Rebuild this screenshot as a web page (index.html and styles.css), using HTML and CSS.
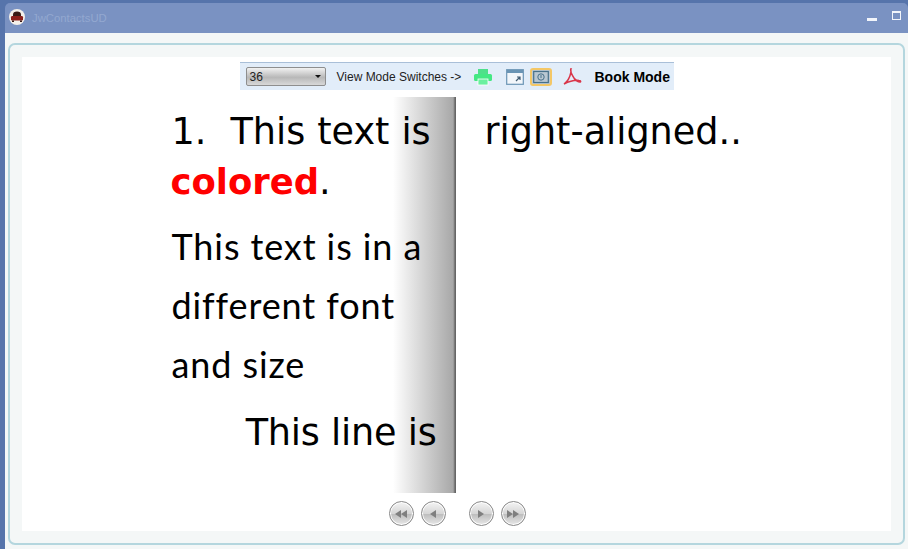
FILE: index.html
```html
<!DOCTYPE html>
<html lang="en">
<head>
    <meta charset="UTF-8">
    <title>JwContactsUD</title>
    <link rel="stylesheet" href="styles.css">
</head>
<body>
    <div class="window">
        <div class="titlebar">
            <div class="app-icon">
                <svg width="18" height="18" viewBox="0 0 18 18">
                    <circle cx="9" cy="9" r="8" fill="#f4f0ea"/>
                    <path d="M5 6.500a4 3 0 0 1 8 0v2H5z" fill="#3a1a14"/>
                    <rect x="3" y="8" width="12" height="4.500" rx="1.200" fill="#8c1f1a"/>
                    <rect x="4" y="12.500" width="2" height="1.500" fill="#3a1a14"/>
                    <rect x="12" y="12.500" width="2" height="1.500" fill="#3a1a14"/>
                </svg>
            </div>
            <span class="app-title">JwContactsUD</span>
            <div class="window-buttons">
                <span class="btn-min"></span>
                <span class="btn-max"></span>
            </div>
        </div>
        <div class="client">
            <div class="panel">
                <div class="content">
                    <div class="toolbar">
                        <div class="zoom-select"><span>36</span><i class="arrow"></i></div>
                        <span class="mode-label">View Mode Switches -&gt;</span>
                        <svg class="tool tool-print" width="20" height="18" viewBox="0 0 20 18">
                            <rect x="5" y="1" width="10" height="5" fill="#4fe08a"/>
                            <rect x="1" y="6" width="18" height="7" rx="1.500" fill="#45e884"/>
                            <rect x="5" y="11" width="10" height="6" fill="#6cf0a0" stroke="#fff" stroke-width=".8"/>
                        </svg>
                        <svg class="tool tool-window" width="18" height="16" viewBox="0 0 18 16">
                            <rect x=".7" y=".7" width="16.600" height="14.600" fill="#f2f6fa" stroke="#6a94b4" stroke-width="1.200"/>
                            <rect x="1" y="1" width="16" height="3" fill="#6a94b4"/>
                            <path d="M10 12l4-4m-3 0h3v3" fill="none" stroke="#3f5a70" stroke-width="1.200"/>
                        </svg>
                        <div class="tool-active">
                            <svg width="16" height="14" viewBox="0 0 16 14">
                                <rect x=".7" y="1.500" width="14.600" height="11" fill="none" stroke="#47708a" stroke-width="1.200"/>
                                <circle cx="8" cy="7" r="3.200" fill="none" stroke="#47708a"/>
                                <path d="M8 5v3" stroke="#47708a"/>
                            </svg>
                        </div>
                        <svg class="tool tool-pdf" width="20" height="18" viewBox="0 0 20 18">
                            <path d="M9 1c-1 2 1 6 3 9 1.500 2 4 4 6 4 1 0 1-1.500-1-1.500-4-.5-9 .5-15 3.500 3-2 6-7 7-12 .2-1.500-.5-3-1-3z" fill="none" stroke="#d9364a" stroke-width="1.500"/>
                        </svg>
                        <span class="mode-name">Book Mode</span>
                    </div>
                    <div class="book">
                        <div class="page page-left">
                            <p class="line-plain first-line spaced">1.&nbsp; This text is</p>
                            <p class="line-plain"><b class="red">colored</b>.</p>
                            <p class="line-font first">This text is in a</p>
                            <p class="line-font">different font</p>
                            <p class="line-font">and size</p>
                            <p class="line-plain line-end">This line is</p>
                        </div>
                        <div class="page page-right">
                            <p class="line-plain first-line">right-aligned..</p>
                        </div>
                    </div>
                    <div class="pager">
                        <button class="nav"><i class="tri left"></i><i class="tri left"></i></button>
                        <button class="nav"><i class="tri left"></i></button>
                        <button class="nav nav-gap"><i class="tri right"></i></button>
                        <button class="nav"><i class="tri right"></i><i class="tri right"></i></button>
                    </div>
                </div>
            </div>
        </div>
    </div>
</body>
</html>
```

FILE: styles.css
```css
body {
    margin: 0;
    height: 549px;
    overflow: hidden;
    background-color: #5674ab;
    font-family: "Liberation Sans", Arial, sans-serif;
    padding: 3px 0 0 5px;
    box-sizing: border-box;
}
.window {
    height: 546px;
    display: flex;
    flex-direction: column;
    border-radius: 5px 5px 0 0;
    overflow: hidden;
}
.titlebar {
    height: 30px;
    flex: none;
    background-color: #7a92c2;
    display: flex;
    align-items: center;
    padding-left: 3px;
}
.app-icon {
    width: 18px;
    height: 18px;
    margin-top: -2px;
}
.app-title {
    margin-left: 6px;
    margin-top: -1px;
    font-size: 11.300px;
    color: #93a8d0;
}
.window-buttons {
    margin-left: auto;
    align-self: flex-start;
    display: flex;
    align-items: flex-start;
    gap: 15px;
    padding: 8px 7px 0 0;
}
.btn-min {
    width: 10px;
    height: 3px;
    margin-top: 7px;
    background-color: #f2f5fb;
}
.btn-max {
    width: 7px;
    height: 6px;
    border: 1px solid #f2f5fb;
    border-top-width: 2px;
    background-color: #7a92c2;
}
.client {
    flex: 1;
    background-color: #f4f7f7;
    padding: 10px 3px 0;
    display: flex;
}
.panel {
    flex: 1;
    height: 502px;
    border: 2px solid #b4d6de;
    border-radius: 7px;
    padding: 12px;
    box-sizing: border-box;
    display: flex;
}
.content {
    flex: 1;
    background-color: #fff;
    display: flex;
    flex-direction: column;
    align-items: center;
    padding-top: 5px;
    box-sizing: border-box;
}
.toolbar {
    width: 434px;
    height: 28px;
    flex: none;
    box-sizing: border-box;
    border-top: 1px solid #a9bfd8;
    background-color: #e2edf9;
    display: flex;
    align-items: center;
    padding-left: 6px;
    font-size: 12px;
    color: #222;
}
.zoom-select {
    width: 80px;
    height: 19px;
    box-sizing: border-box;
    border: 1px solid #8e8e8e;
    border-radius: 2px;
    background: linear-gradient(#f2f2f2, #b8b8b8 55%, #d8d8d8);
    display: flex;
    align-items: center;
    justify-content: space-between;
    padding: 0 4px 0 3px;
    font-size: 12px;
}
.arrow {
    border-left: 3px solid transparent;
    border-right: 3px solid transparent;
    border-top: 3px solid #111;
}
.mode-label {
    margin-left: 11px;
    width: 136px;
    white-space: nowrap;
}
.tool-window {
    margin-left: 13px;
}
.tool-active {
    width: 22px;
    height: 18px;
    margin-left: 6px;
    box-sizing: border-box;
    background-color: #b9c7d2;
    border: 2px solid #f4c766;
    border-radius: 3px;
    display: flex;
    align-items: center;
    justify-content: center;
}
.tool-pdf {
    margin-left: 10px;
}
.mode-name {
    margin-left: 13px;
    font-size: 14px;
    font-weight: bold;
    color: #000;
}
.book {
    width: 588px;
    height: 396px;
    margin-top: 7px;
    margin-left: -2px;
    flex: none;
    display: flex;
    font-family: "DejaVu Sans", sans-serif;
    font-size: 36.600px;
    color: #000;
}
.page {
    width: 294px;
    box-sizing: border-box;
    height: 100%;
}
.page-left {
    padding-left: 10px;
    background: linear-gradient(90deg, #fff 0, #fff 231px, #a8a8a8 291px, #8e8e8e 292px, #666 293px);
}
.page-right {
    padding-left: 29px;
}
.page p {
    margin: 0;
    white-space: pre;
}
.line-plain {
    height: 50px;
    line-height: 50px;
}
.first-line {
    padding-top: 10px;
}
.spaced {
    word-spacing: .4px;
}
.red {
    color: #f00;
    font-size: 35.400px;
    margin-left: -1px;
}
.line-font {
    font-family: Lato, sans-serif;
    font-size: 36px;
    letter-spacing: .9px;
    height: 59px;
    line-height: 59px;
}
.first {
    margin-top: 10px !important;
}
.line-end {
    text-align: right;
    letter-spacing: -.2px;
    padding: 14px 19px 0 0;
}
.pager {
    display: flex;
    gap: 7px;
    margin-top: 8px;
    margin-left: 1px;
}
.nav {
    width: 25px;
    height: 25px;
    padding: 0;
    box-sizing: border-box;
    border: 1px solid #888;
    border-radius: 50%;
    background: linear-gradient(#f4f4f4, #d6d6d6 50%, #bcbcbc 52%, #e8e8e8);
    box-shadow: inset 0 0 0 1px #fff;
    display: flex;
    align-items: center;
    justify-content: center;
}
.nav-gap {
    margin-left: 16px;
}
.tri {
    border-top: 4px solid transparent;
    border-bottom: 4px solid transparent;
}
.tri.left {
    border-right: 6px solid #7f7f7f;
}
.tri.right {
    border-left: 6px solid #7f7f7f;
}
```
